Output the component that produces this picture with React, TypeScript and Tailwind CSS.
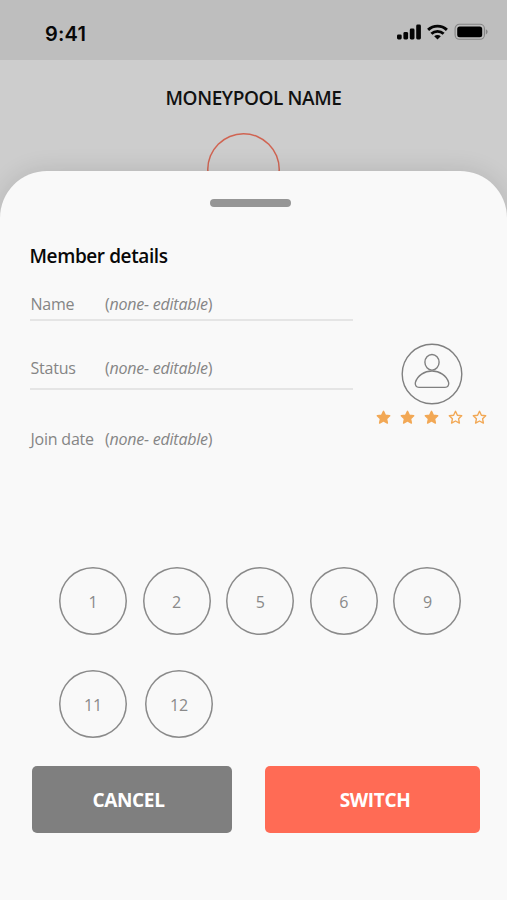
import clsx from "clsx";

const details = [
  { label: "Name", row: "h-[34px] border-b-2 pt-[5px]" },
  { label: "Status", row: "h-[69px] border-b-2 pt-[35px]" },
  { label: "Join date", row: "h-[70px] pt-[37px]" },
];

const STAR =
  "M7.5 1.3l1.9 3.9 4.3.6-3.1 3 .8 4.3-3.9-2.1-3.9 2.1.8-4.3-3.1-3 4.3-.6z";

function StatusIcons() {
  return (
    <svg width="92" height="20" viewBox="0 0 92 20" fill="none">
      <g fill="#050505">
        <rect x="0" y="12.4" width="4.7" height="5" rx="1.4" />
        <rect x="6.4" y="10" width="4.7" height="7.4" rx="1.4" />
        <rect x="12.8" y="6.6" width="4.7" height="10.8" rx="1.4" />
        <rect x="19.2" y="2.6" width="4.7" height="14.8" rx="1.4" />
        <path d="M40.5 17.6l-3.3-3.3c1.8-1.7 4.8-1.7 6.6 0z" />
      </g>
      <g stroke="#050505" strokeWidth="2.9">
        <path d="M31.1 7.9c5.3-5 13.5-5 18.8 0" />
        <path d="M34.4 11.8c3.5-3.3 8.7-3.3 12.2 0" />
      </g>
      <rect x="58.1" y="2.3" width="29.3" height="15" rx="4.3" stroke="#858585" strokeWidth="1.1" />
      <rect x="60.2" y="4.5" width="25" height="10.7" rx="2.5" fill="#000" />
      <path d="M88.8 7.2v5.2c1.1-.4 1.8-1.4 1.8-2.6s-.7-2.2-1.8-2.6z" fill="#858585" />
    </svg>
  );
}

function Star({ filled }: { filled: boolean }) {
  return (
    <svg width="15" height="15" viewBox="0 0 15 15">
      <path
        d={STAR}
        fill={filled ? "#f2a855" : "none"}
        stroke="#f2a855"
        strokeWidth="1.4"
        strokeLinejoin="round"
      />
    </svg>
  );
}

function Avatar() {
  return (
    <svg width="62" height="62" viewBox="0 0 62 62" fill="none" stroke="#808080" strokeWidth="1.4">
      <circle cx="31" cy="31" r="29.8" />
      <ellipse cx="31" cy="19.3" rx="7.1" ry="7.8" />
      <path d="M31 28c7.5 0 14.6 4.6 16.6 11.4.7 2.6-.8 5-3.6 5H18c-2.8 0-4.3-2.4-3.6-5C16.4 32.6 23.5 28 31 28z" />
    </svg>
  );
}

function Slot({ n }: { n: number }) {
  return (
    <button className="flex size-[68px] shrink-0 items-center justify-center rounded-full pt-[2px] text-[16px] tracking-[-0.2px] text-[#8a8a8a] shadow-[inset_0_0_0_1.5px_#8a8a8a]">
      {n}
    </button>
  );
}

export default function App() {
  return (
    <div className="flex h-[900px] w-[507px] flex-col overflow-hidden bg-[#cdcdcd] font-['Open_Sans',sans-serif]">
      <header className="flex h-[60px] shrink-0 items-start justify-between bg-[#bebebe] pl-[45px] pr-[18px]">
        <span className="mt-[20px] font-['Inter',sans-serif] text-[20px] leading-7 font-semibold tracking-[0.2px] text-[#080808]">
          9:41
        </span>
        <div className="mt-[22px]">
          <StatusIcons />
        </div>
      </header>
      <div className="flex h-[111px] shrink-0 flex-col items-center pt-[24px]">
        <h1 className="text-[19px] leading-7 font-semibold tracking-[-0.4px] text-[#111]">MONEYPOOL NAME</h1>
        <div className="mt-[21px] mr-[20px] size-[73px] shrink-0 rounded-full shadow-[inset_0_0_0_1.5px_#d06452]" />
      </div>
      <main className="relative flex flex-1 flex-col rounded-t-[47px] bg-[#f9f9f9] shadow-[0_0_24px_rgba(0,0,0,0.12)]">
        <div className="mt-[28px] ml-[210px] h-[8px] w-[81px] rounded-full bg-[#969696]" />
        <h2 className="mt-[35px] pl-[29.5px] text-[19px] leading-7 font-semibold tracking-[-0.4px] text-[#080808]">
          Member details
        </h2>
        <div className="mt-[17px] flex h-[279px] pl-[30px]">
          <div className="w-[323px] text-[16px] leading-6 tracking-[-0.22px] text-[#858585]">
            {details.map((d) => (
              <div key={d.label} className={clsx("flex border-[#e5e5e5]", d.row)}>
                <span className="w-[75px] shrink-0 pl-[0.5px] whitespace-nowrap">{d.label}</span>
                <span className="whitespace-nowrap">
                  (<i>none- editable</i>)
                </span>
              </div>
            ))}
          </div>
          <div className="ml-[22px] flex w-[112px] flex-col items-center pt-[56px]">
            <div className="pl-[2px]">
              <Avatar />
            </div>
            <div className="mt-[5px] flex gap-[9px]">
              {[1, 2, 3, 4, 5].map((i) => (
                <Star key={i} filled={i <= 3} />
              ))}
            </div>
          </div>
        </div>
        <div className="mt-[1px] flex gap-[15.6px] pl-[59px]">
          {[1, 2, 5, 6, 9].map((n) => (
            <Slot key={n} n={n} />
          ))}
        </div>
        <div className="mt-[34.5px] flex gap-[18px] pl-[59px]">
          {[11, 12].map((n) => (
            <Slot key={n} n={n} />
          ))}
        </div>
        <div className="mt-[28.5px] flex gap-[33px] pl-[32px] text-[19px] font-bold tracking-[-0.35px] text-white">
          <button className="h-[67px] w-[200px] rounded-[5px] bg-[#7f7f7f] pr-[7px] pt-[2px]">CANCEL</button>
          <button className="h-[67px] w-[215px] rounded-[5px] bg-[#ff6b55] pl-[5px] pt-[2px]">SWITCH</button>
        </div>
      </main>
    </div>
  );
}
